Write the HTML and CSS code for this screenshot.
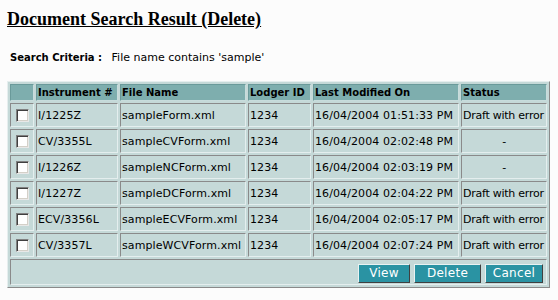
FILE: index.html
```html
<!DOCTYPE html>
<html lang="en">
<head>
    <meta charset="UTF-8">
    <title>Document Search Result (Delete)</title>
    <link rel="stylesheet" href="styles.css">
</head>
<body>
    <h1 class="pageTitle">Document Search Result (Delete)</h1>

    <p class="criteria">
        <span class="criteriaLabel">Search Criteria :</span>
        <span class="criteriaValue">File name contains 'sample'</span>
    </p>

    <table class="resultTable">
        <colgroup>
            <col class="colCheck">
            <col class="colInstr">
            <col class="colFile">
            <col class="colLodger">
            <col class="colDate">
            <col class="colStatus">
        </colgroup>
        <thead>
            <tr>
                <th></th>
                <th>Instrument #</th>
                <th>File Name</th>
                <th>Lodger ID</th>
                <th>Last Modified On</th>
                <th>Status</th>
            </tr>
        </thead>
        <tbody>
            <tr>
                <td class="chk"><span class="box"></span></td>
                <td>I/1225Z</td>
                <td>sampleForm.xml</td>
                <td>1234</td>
                <td>16/04/2004 01:51:33 PM</td>
                <td class="status">Draft with error</td>
            </tr>
            <tr>
                <td class="chk"><span class="box"></span></td>
                <td>CV/3355L</td>
                <td>sampleCVForm.xml</td>
                <td>1234</td>
                <td>16/04/2004 02:02:48 PM</td>
                <td class="status center">-</td>
            </tr>
            <tr>
                <td class="chk"><span class="box"></span></td>
                <td>I/1226Z</td>
                <td>sampleNCForm.xml</td>
                <td>1234</td>
                <td>16/04/2004 02:03:19 PM</td>
                <td class="status center">-</td>
            </tr>
            <tr>
                <td class="chk"><span class="box"></span></td>
                <td>I/1227Z</td>
                <td>sampleDCForm.xml</td>
                <td>1234</td>
                <td>16/04/2004 02:04:22 PM</td>
                <td class="status">Draft with error</td>
            </tr>
            <tr>
                <td class="chk"><span class="box"></span></td>
                <td>ECV/3356L</td>
                <td>sampleECVForm.xml</td>
                <td>1234</td>
                <td>16/04/2004 02:05:17 PM</td>
                <td class="status">Draft with error</td>
            </tr>
            <tr>
                <td class="chk"><span class="box"></span></td>
                <td>CV/3357L</td>
                <td>sampleWCVForm.xml</td>
                <td>1234</td>
                <td>16/04/2004 02:07:24 PM</td>
                <td class="status">Draft with error</td>
            </tr>
            <tr>
                <td colspan="6" class="actions">
                    <div class="btnRow">
                        <button class="btn btnView">View</button>
                        <button class="btn btnDelete">Delete</button>
                        <button class="btn btnCancel">Cancel</button>
                    </div>
                </td>
            </tr>
        </tbody>
    </table>
</body>
</html>
```

FILE: styles.css
```css
* {
    box-sizing: border-box;
}

body {
    margin: 0;
    padding: 0 7px;
    background-color: #fcfcfc;
    font-family: "DejaVu Sans", Verdana, sans-serif;
    font-size: 11px;
    color: #000;
}

.pageTitle {
    margin: 0;
    padding: 9px 0 0 0;
    font-family: "Liberation Serif", "Times New Roman", serif;
    font-size: 18px;
    font-weight: bold;
    text-decoration: underline;
    line-height: 20px;
}

.criteria {
    margin: 22px 0 0 3px;
    line-height: 13px;
}

.criteriaLabel {
    font-weight: bold;
    font-size: 10px;
    margin-right: 6px;
}

.criteriaValue {
    font-size: 11px;
}

.resultTable {
    margin-top: 17px;
    width: 543px;
    table-layout: fixed;
    border-collapse: separate;
    border-spacing: 2px;
    background-color: #c5d9d8;
    border: 1px solid;
    border-color: #e6eeee #8a8a8a #8a8a8a #e6eeee;
}

.colCheck { width: 24px; }
.colInstr { width: 82px; }
.colFile { width: 126px; }
.colLodger { width: 63px; }
.colDate { width: 146px; }
.colStatus { width: 86px; }

.resultTable th,
.resultTable td {
    padding: 0 1px;
    text-align: left;
    white-space: nowrap;
    overflow: hidden;
}

.resultTable th {
    height: 17px;
    font-size: 10px;
    background-color: #7eaeae;
    font-weight: bold;
    border: 1px solid;
    border-color: #6a9a9a #c8dcdc #c8dcdc #6a9a9a;
}

.resultTable td {
    height: 24px;
    font-size: 11px;
    letter-spacing: 0.1px;
    border: 1px solid;
    border-color: #8a8a8a #e4eeee #e4eeee #8a8a8a;
}

.resultTable td.status {
    letter-spacing: -0.25px;
}

.resultTable td.center {
    text-align: center;
}

.resultTable td.chk {
    text-align: center;
    padding: 0;
}

.box {
    display: inline-block;
    width: 13px;
    height: 13px;
    vertical-align: middle;
    background-color: #fff;
    border: 1px solid;
    border-color: #808080 #e8e8e8 #e8e8e8 #808080;
    box-shadow: inset 1px 1px 0 #404040, inset -1px -1px 0 #d4d0c8;
}

.resultTable td.actions {
    height: 26px;
    padding: 0 3px 0 0;
}

.btnRow {
    display: flex;
    justify-content: flex-end;
    gap: 4px;
}

.btn {
    height: 19px;
    padding: 0;
    margin: 2px 0 0 0;
    font-family: "DejaVu Sans", Verdana, sans-serif;
    font-size: 12px;
    letter-spacing: 0.3px;
    color: #fff;
    background-color: #2a93a3;
    border: 1px solid;
    border-color: #e8f2f2 #404040 #404040 #e8f2f2;
    cursor: pointer;
}

.btnView { width: 52px; }
.btnDelete { width: 67px; }
.btnCancel { width: 58px; }
```
